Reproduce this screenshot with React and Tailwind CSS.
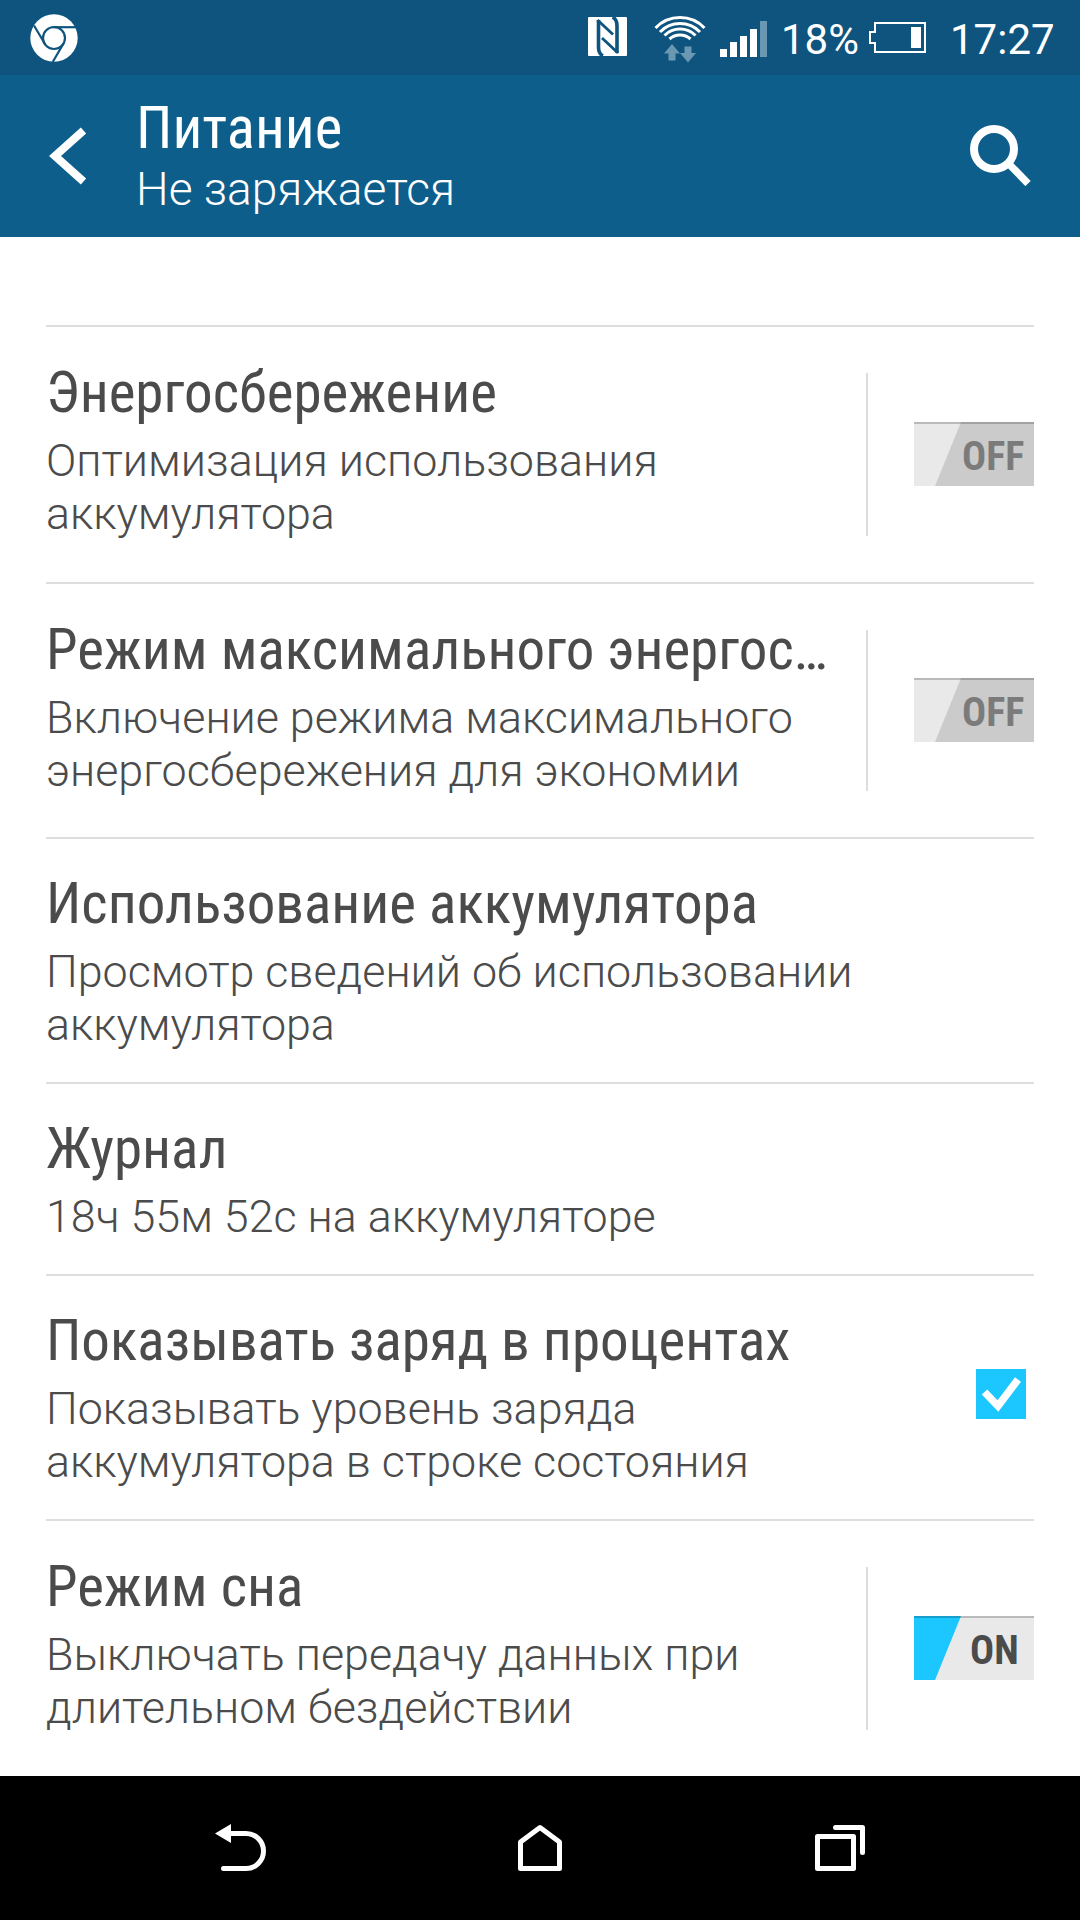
const TITLE = "font-normal [font-stretch:75%]";

const ChromeIcon = () => (
  <svg width="48" height="48" viewBox="0 0 48 48" fill="none">
    <circle cx="24" cy="24" r="23.7" fill="#fff" />
    <g stroke="#0e547e" strokeWidth="2.2">
      <circle cx="24" cy="24" r="11" />
      <path d="M23 13.2H47" />
      <path d="M4 11.5L15 30" />
      <path d="M33.5 29.5L22.7 48" />
    </g>
  </svg>
);

const NfcIcon = () => (
  <svg width="39" height="39" viewBox="0 0 39 39" fill="none">
    <rect width="39" height="39" rx="1" fill="#fff" />
    <g stroke="#0e547e">
      <path d="M10.5 3V30C10.5 35 12 37.5 15 38.8" strokeWidth="3.6" />
      <path d="M29 36V9C29 4 27.5 1.5 24.5 0.2" strokeWidth="3.6" />
      <path d="M9.5 3L25 17.5" strokeWidth="2.8" />
      <path d="M30 36L14 21" strokeWidth="2.8" />
    </g>
  </svg>
);

const WifiIcon = () => (
  <svg width="52" height="50" viewBox="0 0 52 50" fill="none">
    <g stroke="#fff" strokeWidth="3">
      <path d="M1.5 15A34 34 0 0 1 50.5 15" />
      <path d="M6 19A28 28 0 0 1 46 19" />
      <path d="M10.5 22.5A22 22 0 0 1 41.5 22.5" />
      <path d="M15.5 26A16 16 0 0 1 36.5 26" />
    </g>
    <path d="M18 31L26 40.5H21.5V47.5H14.5V40.5H10Z" fill="#6a97b1" />
    <path d="M34 49.5L42 40H37.5V33.5H30.5V40H26Z" fill="#6a97b1" />
  </svg>
);

const SignalIcon = () => (
  <svg width="47" height="36" viewBox="0 0 47 36" fill="#fff">
    <rect x="0" y="28" width="7" height="8" />
    <rect x="10" y="21" width="7" height="15" />
    <rect x="20" y="15" width="7" height="21" />
    <rect x="30" y="8" width="7" height="28" />
    <rect x="40" y="0" width="7" height="36" fill="#6a97b1" />
  </svg>
);

const BatteryIcon = () => (
  <svg width="57" height="31" viewBox="0 0 57 31" fill="none">
    <path d="M6 1H56V30H6V21H1V10H6Z" stroke="#fff" strokeWidth="2" />
    <rect x="42" y="5" width="10" height="21" fill="#fff" />
  </svg>
);

function StatusBar() {
  return (
    <div className="flex h-[75px] items-center bg-[#0e547e] pl-[30px] text-white">
      <ChromeIcon />
      <div className="ml-[510px] mt-[-2px]"><NfcIcon /></div>
      <div className="ml-[27px] mt-[1px]"><WifiIcon /></div>
      <div className="ml-[14px] mt-[3px]"><SignalIcon /></div>
      <span className="ml-[14px] mt-[4px] w-[79px] whitespace-nowrap text-[42px] leading-none">18%</span>
      <div className="ml-[9px]"><BatteryIcon /></div>
      <span className="ml-[24px] mt-[4px] whitespace-nowrap text-[42px] leading-none">17:27</span>
    </div>
  );
}

function Header() {
  return (
    <header className="flex h-[162px] bg-[#0d5e8b] text-white">
      <svg className="ml-[49px] mt-[51px]" width="38" height="60" viewBox="0 0 38 60" fill="none">
        <path d="M34.5 4.5L6 30L34.5 55.5" stroke="#fff" strokeWidth="8" />
      </svg>
      <div className="ml-[49px] flex-1 pt-[19px]">
        <h1 className={`${TITLE} text-[58.7px] leading-[68px]`}>Питание</h1>
        <p className="text-[46.1px] font-light leading-[54px]">Не заряжается</p>
      </div>
      <svg className="mr-[49px] mt-[50px]" width="61" height="61" viewBox="0 0 61 61" fill="none" stroke="#fff">
        <circle cx="24" cy="24" r="20" strokeWidth="8" />
        <path d="M38 38L58 58.5" strokeWidth="7.5" />
      </svg>
    </header>
  );
}

function Toggle({ on }) {
  return (
    <button
      className={`relative mb-[2px] h-16 w-[120px] ${on ? "bg-[#e9e9e9] text-[#4b4b4b]" : "bg-[#cbcbcb] text-[#7b7b7b]"}`}
    >
      <svg className="absolute inset-0" width="120" height="64" viewBox="0 0 120 64">
        <path d="M0 0H47L21 64H0Z" fill={on ? "#1cc6ff" : "#e9e9e9"} />
        <rect width="120" height="2" fill="#000" fillOpacity="0.2" />
      </svg>
      <span
        className={`absolute top-[15px] text-[40px] font-bold leading-[40px] [font-stretch:75%] ${on ? "left-[56px]" : "left-[48px]"}`}
      >
        {on ? "ON" : "OFF"}
      </span>
    </button>
  );
}

const Checkbox = () => (
  <svg className="mb-[7px] mr-2" width="50" height="50" viewBox="0 0 50 50" fill="none">
    <rect width="50" height="50" fill="#1cc6ff" />
    <path d="M8.5 23L22 37L42 10.5" stroke="#fff" strokeWidth="7.5" />
  </svg>
);

const settings = [
  { title: "Энергосбережение", lines: ["Оптимизация использования", "аккумулятора"], control: "off", height: "h-[257px]" },
  {
    title: "Режим максимального энергос…",
    lines: ["Включение режима максимального", "энергосбережения для экономии"],
    control: "off",
    height: "h-[255px]",
  },
  { title: "Использование аккумулятора", lines: ["Просмотр сведений об использовании", "аккумулятора"], height: "h-[245px]" },
  { title: "Журнал", lines: ["18ч 55м 52с на аккумуляторе"], height: "h-[192px]" },
  {
    title: "Показывать заряд в процентах",
    lines: ["Показывать уровень заряда", "аккумулятора в строке состояния"],
    control: "check",
    height: "h-[245px]",
  },
  { title: "Режим сна", lines: ["Выключать передачу данных при", "длительном бездействии"], control: "on", height: "h-[257px]" },
];

function SettingRow({ title, lines, control, height }) {
  const isToggle = control === "on" || control === "off";

  return (
    <li className={`flex border-t-2 border-[#dddddd] ${height}`}>
      <div className={`min-w-0 flex-1 ${isToggle ? "pt-8" : "pt-[31px]"}`}>
        <h2 className={`${TITLE} mb-2 whitespace-nowrap text-[57px] leading-[67px]`}>{title}</h2>
        {lines.map((line) => (
          <p key={line} className="whitespace-nowrap text-[44.8px] font-light leading-[53px]">{line}</p>
        ))}
      </div>
      {isToggle && (
        <div className="my-[46px] ml-[36px] flex items-center border-l-2 border-[#dddddd] pl-[46px]">
          <Toggle on={control === "on"} />
        </div>
      )}
      {control === "check" && (
        <div className="flex items-center"><Checkbox /></div>
      )}
    </li>
  );
}

function NavBar() {
  return (
    <nav className="flex h-[144px] items-start bg-black pt-12">
      <svg className="ml-[215px]" width="52" height="48" viewBox="0 0 52 48" fill="none">
        <path d="M0 9.5L16 0V19Z" fill="#fff" />
        <path d="M14 9.5H31A17.5 17.5 0 0 1 31 44.5H8.5" stroke="#fff" strokeWidth="5" strokeLinecap="round" />
      </svg>
      <svg className="ml-[251px]" width="44" height="48" viewBox="0 0 44 48" fill="none">
        <path d="M2.5 44.5V18L22 3.5L41.5 18V44.5Z" stroke="#fff" strokeWidth="5" strokeLinejoin="round" />
      </svg>
      <svg className="ml-[253px]" width="50" height="48" viewBox="0 0 50 48" fill="none" stroke="#fff" strokeWidth="5" strokeLinecap="round" strokeLinejoin="round">
        <path d="M2.5 12.5H38.5V44.5H2.5Z" />
        <path d="M20.5 3.5H47.5V28.5" />
      </svg>
    </nav>
  );
}

export default function App() {
  return (
    <div className="flex h-[1920px] w-[1080px] flex-col overflow-hidden bg-white font-['Roboto',sans-serif]">
      <StatusBar />
      <Header />
      <ul className="flex-1 px-[46px] pt-[88px] text-[#4b4b4b]">
        {settings.map((item) => (
          <SettingRow key={item.title} {...item} />
        ))}
      </ul>
      <NavBar />
    </div>
  );
}
